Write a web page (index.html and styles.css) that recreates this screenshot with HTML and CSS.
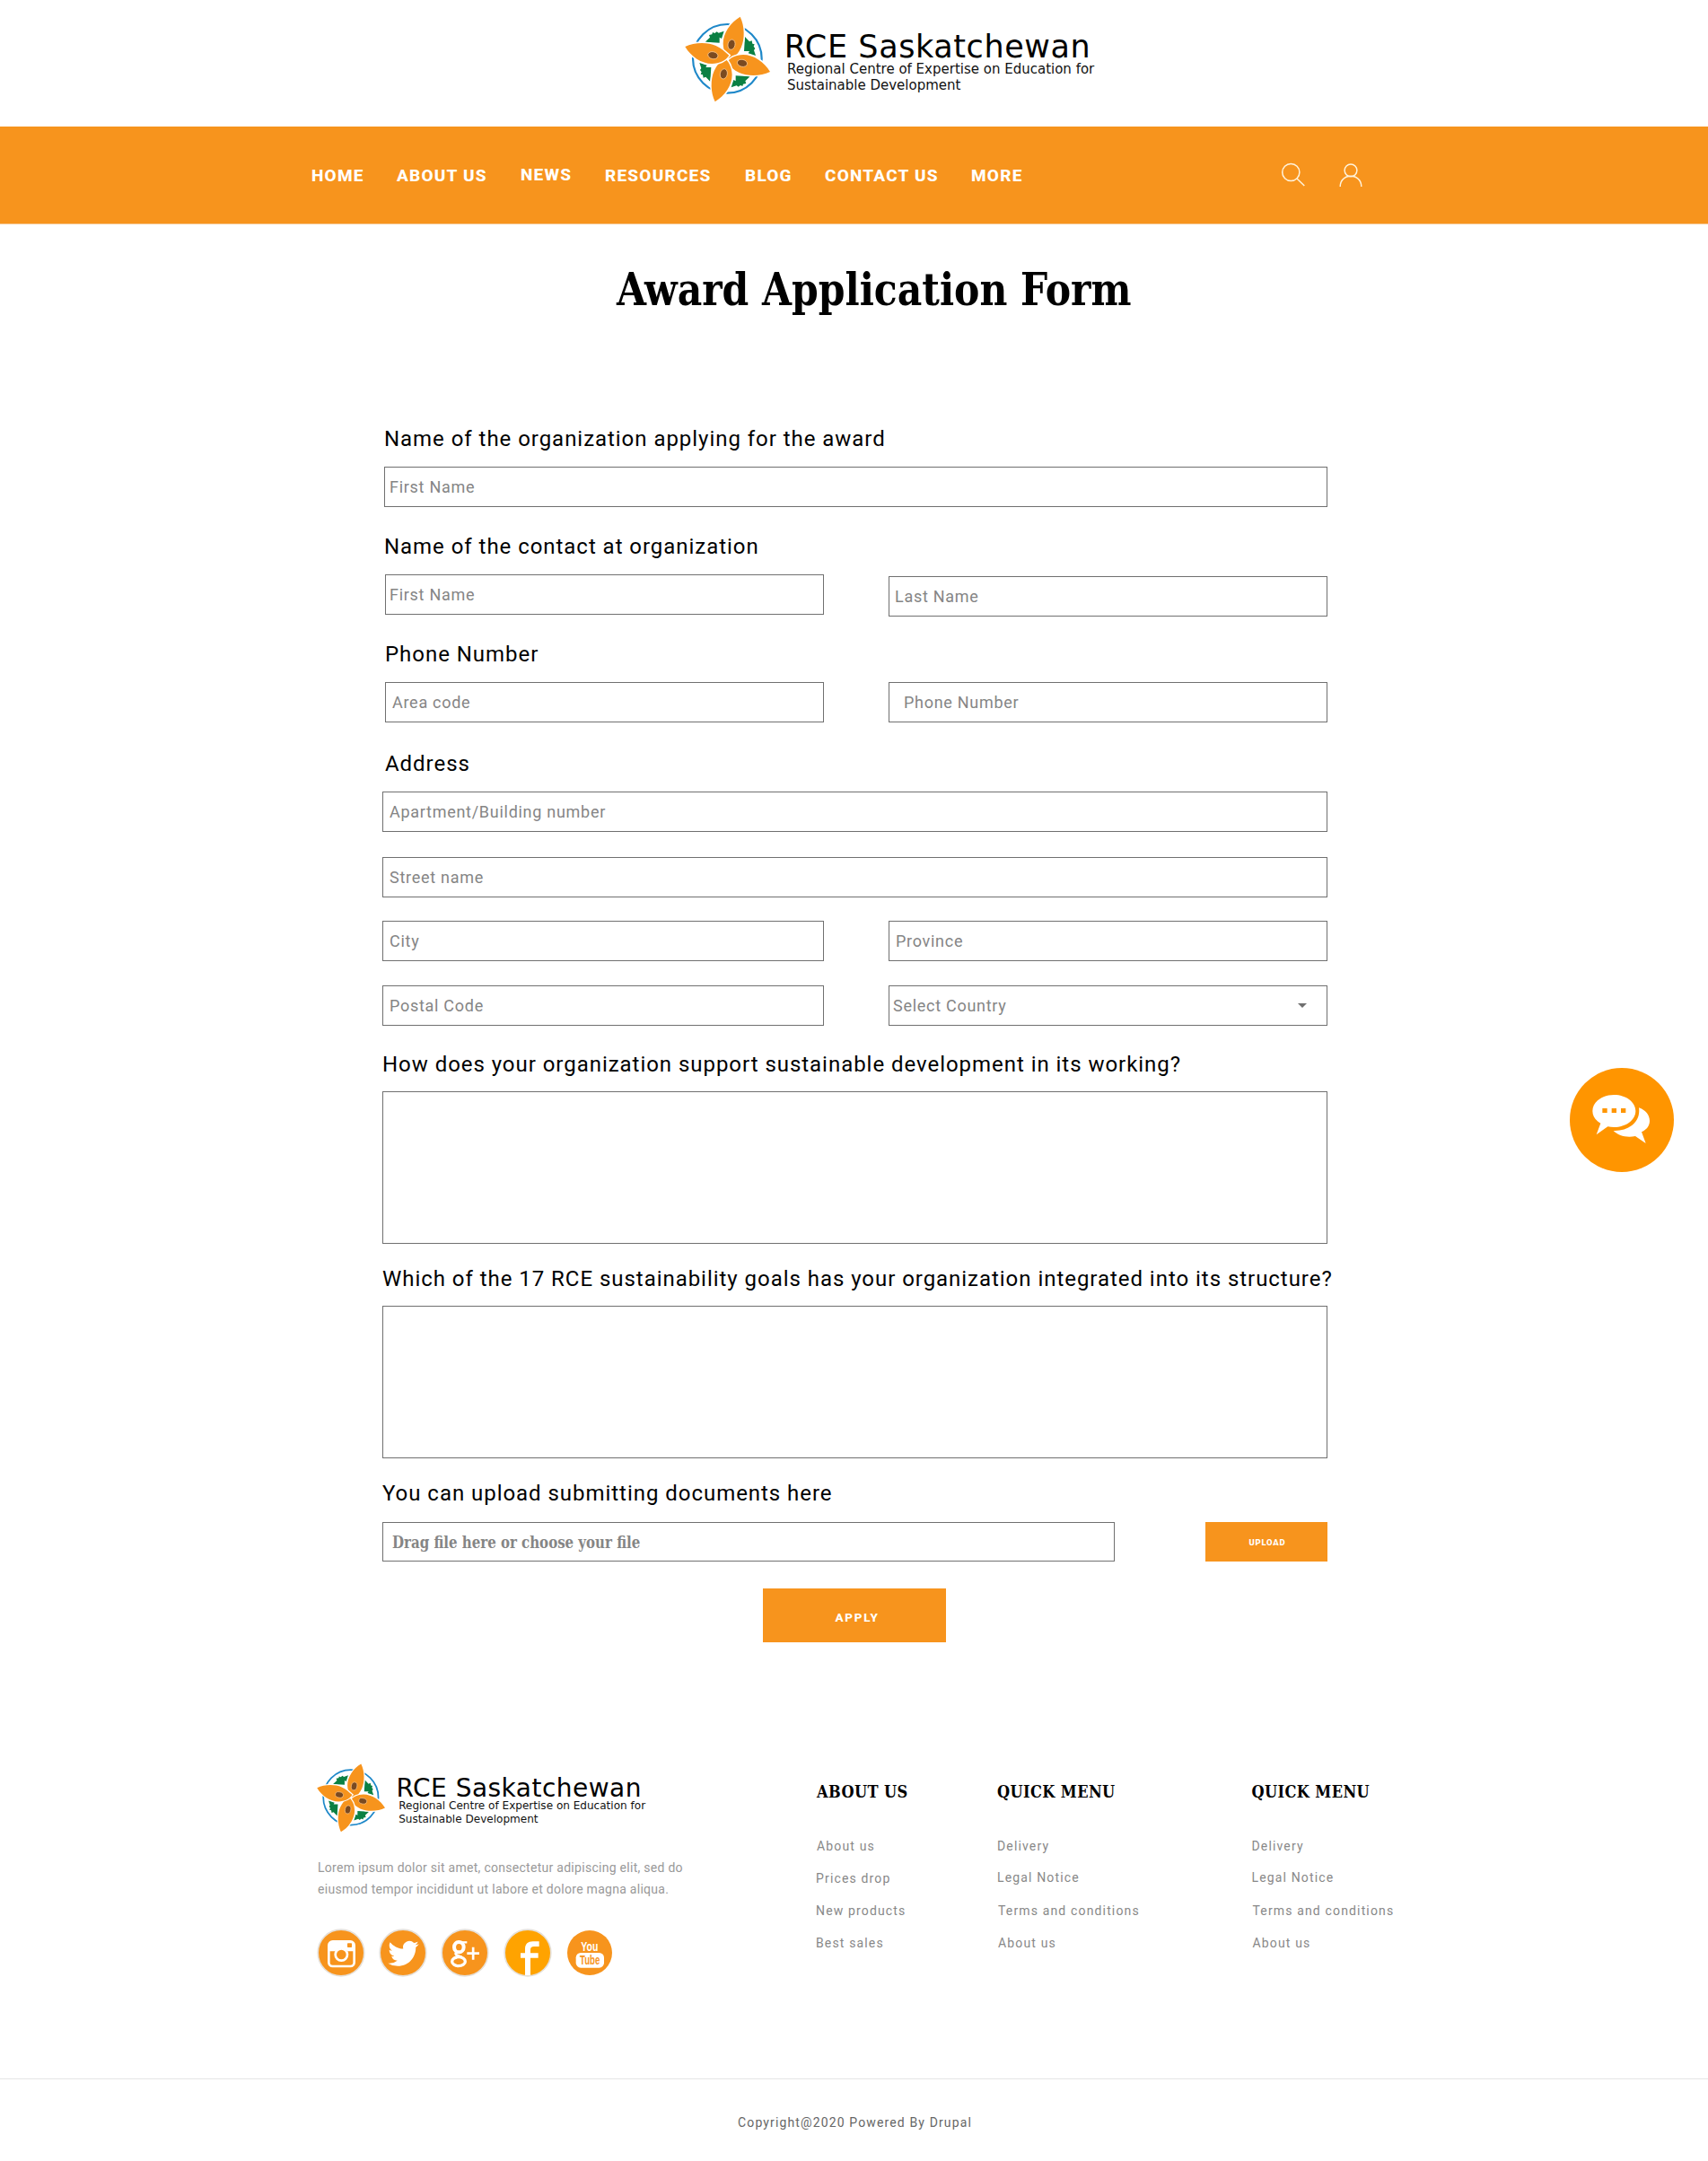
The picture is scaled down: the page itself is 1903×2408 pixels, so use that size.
FILE: index.html
```html
<!DOCTYPE html>
<html lang="en">
<head>
<meta charset="utf-8">
<title>Award Application Form</title>
<link rel="stylesheet" href="styles.css">
</head>
<body>
<svg class="defs" aria-hidden="true">
  <defs>
    <g id="leaf"><path d="M138 139 L154 124 L151 116 L161 114 L163 107 L170 110 L177 105 L183 109 L201 103 L193 128 L186 124 L186 142 Z" fill="#0b8043"/></g>
    <g id="petal">
      <path d="M255 55 C270 85 271 130 258 158 C250 176 238 188 226 202 C208 190 199 170 198 145 C198 110 222 74 255 55 Z" fill="#f7941d" stroke="#fff" stroke-width="9" paint-order="stroke"/>
    </g>
    <g id="seed"><ellipse cx="226" cy="148" rx="12" ry="17" transform="rotate(12 226 148)" fill="#7a4a21" stroke="#fbc58a" stroke-width="2.5"/></g>
    <symbol id="emblem" viewBox="70 53 288 288">
      <circle cx="212" cy="195" r="115" fill="none" stroke="#1e88c9" stroke-width="6.500"/>
      <use href="#leaf"/><use href="#leaf" transform="rotate(90 213 197)"/><use href="#leaf" transform="rotate(180 213 197)"/><use href="#leaf" transform="rotate(270 213 197)"/>
      <use href="#petal"/><use href="#petal" transform="rotate(90 213 197)"/><use href="#petal" transform="rotate(180 213 197)"/><use href="#petal" transform="rotate(270 213 197)"/>
      <use href="#seed"/><use href="#seed" transform="rotate(90 213 197)"/><use href="#seed" transform="rotate(180 213 197)"/><use href="#seed" transform="rotate(270 213 197)"/>
    </symbol>
  </defs>
</svg>

<header class="top">
  <a class="logo">
    <svg class="emblem"><use href="#emblem"/></svg>
    <span class="logo-text">
      <span class="logo-name">RCE Saskatchewan</span>
      <span class="logo-sub">Regional Centre of Expertise on Education for<br>Sustainable Development</span>
    </span>
  </a>
</header>

<nav class="nav">
  <div class="nav-links">
    <a>HOME</a><a>ABOUT US</a><a class="raised">NEWS</a><a>RESOURCES</a><a>BLOG</a><a>CONTACT US</a><a>MORE</a>
  </div>
  <div class="nav-icons">
    <svg width="28" height="28" viewBox="0 0 28 28"><circle cx="11.3" cy="11" r="9.6"/><path d="M18 18l8.3 8"/></svg>
    <svg width="28" height="28" viewBox="0 0 28 28"><circle cx="14" cy="8.8" r="6.9"/><path d="M2.2 27c0-7 5-11.7 11.8-11.7S25.800 20 25.800 27"/></svg>
  </div>
</nav>

<main>
  <h1><span>Award Application Form</span></h1>

  <form class="form">
    <section class="group inset">
      <label>Name of the organization applying for the award</label>
      <div class="field wide">First Name</div>
    </section>
    <section class="group inset">
      <label>Name of the contact at organization</label>
      <div class="row">
        <div class="field">First Name</div>
        <div class="field lowered">Last Name</div>
      </div>
    </section>
    <section class="group inset phone">
      <label>Phone Number</label>
      <div class="row">
        <div class="field pad-6">Area code</div>
        <div class="field pad-16">Phone Number</div>
      </div>
    </section>
    <section class="group address">
      <label>Address</label>
      <div class="field">Apartment/Building number</div>
      <div class="field street">Street name</div>
      <div class="row city">
        <div class="field">City</div>
        <div class="field">Province</div>
      </div>
      <div class="row postal">
        <div class="field">Postal Code</div>
        <div class="field select">Select Country<i class="caret"></i></div>
      </div>
    </section>
    <section class="group essay">
      <label>How does your organization support sustainable development in its working?</label>
      <div class="field area"></div>
    </section>
    <section class="group essay">
      <label>Which of the 17 RCE sustainability goals has your organization integrated into its structure?</label>
      <div class="field area"></div>
    </section>
    <section class="group upload">
      <label>You can upload submitting documents here</label>
      <div class="upload-row">
        <div class="field file"><span>Drag file here or choose your file</span></div>
        <button type="button" class="btn btn-upload">UPLOAD</button>
      </div>
    </section>
    <button type="button" class="btn btn-apply">APPLY</button>
  </form>
</main>

<footer>
  <div class="footer-main">
    <section class="about">
      <a class="logo small">
        <svg class="emblem"><use href="#emblem"/></svg>
        <span class="logo-text">
          <span class="logo-name">RCE Saskatchewan</span>
          <span class="logo-sub">Regional Centre of Expertise on Education for<br>Sustainable Development</span>
        </span>
      </a>
      <p>Lorem ipsum dolor sit amet, consectetur adipiscing elit, sed do<br>eiusmod tempor incididunt ut labore et dolore magna aliqua.</p>
      <div class="social">
        <svg viewBox="0 0 162 162">
          <circle cx="81" cy="81" r="77.500" class="disc ring"/>
          <rect x="40" y="43" width="85" height="83" rx="13" fill="none" stroke="#fff" stroke-width="8"/>
          <path d="M40 76V56q0-13 13-13h59q13 0 13 13v20h-22a27 27 0 0 0-42 0z" fill="#fff"/>
          <circle cx="82" cy="87" r="20" fill="#f7941d" stroke="#fff" stroke-width="8"/>
          <rect x="102" y="49" width="15" height="14" rx="2" fill="#f7941d"/>
        </svg>
        <svg viewBox="0 0 162 162">
          <circle cx="81" cy="81" r="77.500" class="disc ring"/>
          <path transform="translate(31 32) scale(4.3)" fill="#fff" d="M23.953 4.57a10 10 0 01-2.825.775 4.958 4.958 0 002.163-2.723c-.951.555-2.005.959-3.127 1.184a4.92 4.92 0 00-8.384 4.482C7.690 8.095 4.067 6.130 1.640 3.162a4.822 4.822 0 00-.666 2.475c0 1.710.870 3.213 2.188 4.096a4.904 4.904 0 01-2.228-.616v.06a4.923 4.923 0 003.946 4.827 4.996 4.996 0 01-2.212.085 4.936 4.936 0 004.604 3.417 9.867 9.867 0 01-6.102 2.105c-.39 0-.779-.023-1.170-.067a13.995 13.995 0 007.557 2.209c9.053 0 13.998-7.496 13.998-13.985 0-.21 0-.42-.015-.63A9.935 9.935 0 0024 4.590z"/>
        </svg>
        <svg viewBox="0 0 162 162">
          <circle cx="81" cy="81" r="77.500" class="disc ring"/>
          <g fill="none" stroke="#fff">
            <ellipse cx="61" cy="62" rx="16" ry="17" stroke-width="12"/>
            <path d="M60 46h28" stroke-width="7"/>
            <path d="M54 78q-9 8 4 13l12 5" stroke-width="9"/>
            <ellipse cx="60" cy="110" rx="22" ry="15" stroke-width="10"/>
            <path d="M88 83h41M108.500 62v42" stroke-width="8"/>
          </g>
        </svg>
        <svg viewBox="0 0 162 162">
          <circle cx="81" cy="81" r="77.500" class="disc ring amber"/>
          <path fill="#fff" d="M72 156V98H57V82h15V68c0-17 10-25 26-25h21v17h-17c-9 0-12 4-12 11v11h26v16H90v58z"/>
        </svg>
        <svg viewBox="0 0 162 162">
          <circle cx="81" cy="81" r="75" class="disc"/>
          <text x="52" y="74" textLength="57" lengthAdjust="spacingAndGlyphs" class="yt" fill="#fff">You</text>
          <rect x="35" y="81" width="94" height="50" rx="16" fill="#fff"/>
          <text x="48" y="120" textLength="67" lengthAdjust="spacingAndGlyphs" class="yt" fill="#f7941d">Tube</text>
        </svg>
      </div>
    </section>
    <section class="col">
      <h2 class="right">ABOUT US</h2>
      <a class="right">About us</a><a>Prices drop</a><a>New products</a><a>Best sales</a>
    </section>
    <section class="col">
      <h2>QUICK MENU</h2>
      <a>Delivery</a><a class="up">Legal Notice</a><a class="right">Terms and conditions</a><a class="right">About us</a>
    </section>
    <section class="col">
      <h2>QUICK MENU</h2>
      <a>Delivery</a><a class="up">Legal Notice</a><a class="right">Terms and conditions</a><a class="right">About us</a>
    </section>
  </div>
  <div class="copyright">Copyright@2020 Powered By Drupal</div>
</footer>

<a class="chat" aria-label="Chat">
  <svg viewBox="0 0 348 348">
    <circle cx="174" cy="174" r="174" fill="#ff9500"/>
    <path fill="#fff" d="M231 133c22 8 36 24 36 44 0 15-8 28-27 37l14 38-35-24c-30 6-57-2-73-18 50 2 92-28 85-77z"/>
    <path fill="#fff" d="M148 90c40 0 72 24 72 54s-32 54-72 54q-11 0-21-2l-38 27 14-38c-17-10-27-24-27-41 0-30 32-54 72-54z"/>
    <path fill="#ff9500" d="M109 135h16v15h-16zM140 135h16v15h-16zM171 135h16v15h-16z"/>
  </svg>
</a>
</body>
</html>
```
FILE: styles.css
```css
* { box-sizing: border-box; }
body {
  margin: 0;
  position: relative;
  background: #fff;
  color: #000;
  font-family: Roboto, "Open Sans", sans-serif;
}
.defs { position: absolute; width: 0; height: 0; }

/* Header */
.top { height: 141px; padding: 18px 0 0 763px; }
.logo { display: flex; font-size: 35px; font-family: "DejaVu Sans", sans-serif; }
.logo.small { font-size: 28px; }
.emblem { width: 2.743em; height: 2.743em; flex: none; }
.logo-text { display: flex; flex-direction: column; padding: .557em 0 0 .42em; white-space: nowrap; }
.logo-name { line-height: .886em; letter-spacing: .017em; }
.logo-sub {
  color: #111;
  font-size: .429em;
  line-height: 1.2em;
  margin: -.03em 0 0 .22em;
}
.small .logo-sub { font-size: .431em; }

/* Navigation */
.nav {
  height: 109px;
  background: #f7941d;
  border-bottom: 1px solid #f6c58b;
  display: flex;
  align-items: center;
  padding-left: 347px;
}
.nav-links {
  display: grid;
  grid-template-columns: 95px 138px 94px 156px 89px 163px 345px;
  color: #fff;
  font-weight: 800;
  font-size: 19px;
  letter-spacing: 1.2px;
  line-height: 24px;
  white-space: nowrap;
  padding-top: 1px;
}
.raised { margin-top: -1px; }
.nav-icons { display: flex; gap: 36px; margin-bottom: 1px; }
.nav-icons svg { fill: none; stroke: #fff3dc; stroke-width: 1.5; }

/* Title */
h1 {
  margin: 0;
  padding: 40px 0 0 687px;
  height: 225px;
  font: 700 50px/66px "DejaVu Serif Condensed", "DejaVu Serif", serif;
  white-space: nowrap;
}
h1 span { display: inline-block; transform: scaleX(.945); transform-origin: 0 50%; }

/* Form */
.form { margin-left: 426px; width: 1053px; display: flex; flex-direction: column; }
.group { display: flex; flex-direction: column; margin-bottom: 30px; }
label {
  font-size: 24px;
  line-height: 28px;
  letter-spacing: .96px;
  margin-bottom: 17px;
  white-space: nowrap;
}
.field {
  height: 45px;
  border: 1px solid #707070;
  display: flex;
  align-items: center;
  padding-left: 7px;
  color: #858585;
  font-size: 18px;
  line-height: 22px;
  letter-spacing: .72px;
  white-space: nowrap;
}
.row { display: grid; grid-template-columns: 1fr 489px; column-gap: 72px; align-items: start; }
.inset { padding-left: 3px; }
.inset label { margin-left: -1px; }
.inset .field { padding-left: 4px; }
.inset .field.wide { margin-left: -1px; padding-left: 5px; }
.inset .field.lowered { margin: 2px 0 -2px; padding-left: 6px; }
.inset .field.pad-6 { padding-left: 7px; }
.inset .field.pad-16 { padding-left: 16px; }
.phone { margin-bottom: 32px; }
.phone label { margin-left: 0; }
.address { margin-bottom: 29px; }
.address label { margin-left: 3px; }
.street { margin-top: 28px; }
.city { margin-top: 26px; }
.postal { margin-top: 27px; }
.select { justify-content: space-between; padding: 0 22px 0 4px; }
.caret { border: 5px solid transparent; border-top-color: #707070; border-bottom: 0; }
.essay { margin-bottom: 25px; }
.essay label { margin-bottom: 16px; }
.area { height: 170px; }
.upload label { margin-bottom: 18px; }
.upload-row { display: flex; justify-content: space-between; }
.file {
  width: 816px;
  height: 44px;
  padding: 1px 0 0 10px;
  font-family: "DejaVu Serif Condensed", "DejaVu Serif", serif;
  font-weight: 700;
  letter-spacing: 0;
}
.file span { display: inline-block; transform: scaleX(.927); transform-origin: 0 50%; }
.btn {
  border: 0;
  padding: 0;
  background: #f7941d;
  color: #fff;
  font-family: inherit;
  font-weight: 700;
}
.btn-upload { width: 136px; height: 44px; font-size: 9.5px; font-weight: 800; letter-spacing: .8px; padding-left: 2px; }
.btn-apply { align-self: flex-start; margin-left: 424px; width: 204px; height: 60px; font-size: 13.5px; font-weight: 800; letter-spacing: 1.7px; padding: 3px 0 0 6px; }

/* Footer */
.footer-main {
  display: grid;
  grid-template-columns: 556px 202px 283.5px 1fr;
  padding: 135px 0 0 353px;
  height: 486px;
}
.about p {
  margin: 27px 0 0 1px;
  font-size: 14px;
  line-height: 24px;
  letter-spacing: .28px;
  color: #999;
}
.social { display: flex; gap: 15.2px; margin: 32px 0 0; }
.social svg { width: 54px; height: 54px; flex: none; }
.disc { fill: #f7941d; }
.ring { stroke: #e6e0d8; stroke-width: 5; }
.amber { fill: #ffa300; }
.yt { font: 700 46px "Liberation Sans Narrow", "Liberation Sans", sans-serif; }
.col { display: flex; flex-direction: column; white-space: nowrap; padding-top: 20px; }
.col h2 {
  margin: 0 0 30px;
  font: 700 18px/24px "DejaVu Serif Condensed", "DejaVu Serif", serif;
  letter-spacing: .4px;
}
.col a { font-size: 14px; line-height: 36px; letter-spacing: 1.15px; color: #888; }
.col .up { margin: -1px 0 1px; }
.col .right { margin-left: 1px; }
.copyright {
  border-top: 1px solid #e5e5e5;
  height: 92px;
  padding: 38px 0 0 2px;
  text-align: center;
  font-size: 14px;
  line-height: 20px;
  letter-spacing: 1.13px;
  color: #666;
}

/* Floating chat button */
.chat { position: absolute; left: 1748.5px; top: 1190px; width: 116px; height: 116px; }
.chat svg { display: block; width: 100%; height: 100%; }
```
